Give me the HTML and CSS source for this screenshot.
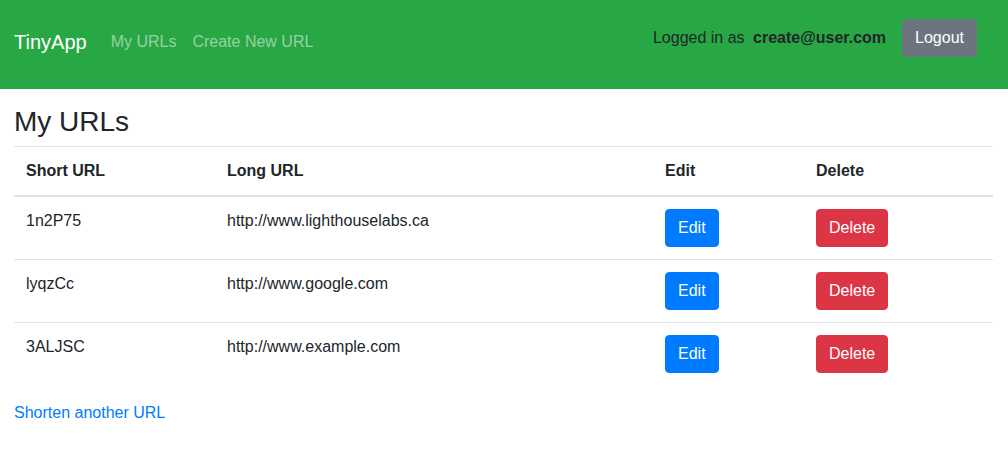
FILE: index.html
```html
<!DOCTYPE html>
<html lang="en">
<head>
<meta charset="utf-8">
<title>TinyApp</title>
<link rel="stylesheet" href="styles.css">
</head>
<body>
<nav class="navbar">
  <div class="nav-left">
    <a class="brand" href="#">TinyApp</a>
    <a class="nav-link" href="#">My URLs</a>
    <a class="nav-link" href="#">Create New URL</a>
  </div>
  <div class="nav-right">
    <span class="login-text">Logged in as <b class="email">create@user.com</b></span>
    <button class="btn btn-secondary" type="button">Logout</button>
  </div>
</nav>
<main class="main">
  <h3 class="title">My URLs</h3>
  <table class="table">
    <thead>
      <tr>
        <th class="col-short">Short URL</th>
        <th class="col-long">Long URL</th>
        <th class="col-edit">Edit</th>
        <th class="col-del">Delete</th>
      </tr>
    </thead>
    <tbody>
      <tr>
        <td>1n2P75</td>
        <td>http://www.lighthouselabs.ca</td>
        <td><button class="btn btn-primary" type="button">Edit</button></td>
        <td><button class="btn btn-danger" type="button">Delete</button></td>
      </tr>
      <tr>
        <td>lyqzCc</td>
        <td>http://www.google.com</td>
        <td><button class="btn btn-primary" type="button">Edit</button></td>
        <td><button class="btn btn-danger" type="button">Delete</button></td>
      </tr>
      <tr>
        <td>3ALJSC</td>
        <td>http://www.example.com</td>
        <td><button class="btn btn-primary" type="button">Edit</button></td>
        <td><button class="btn btn-danger" type="button">Delete</button></td>
      </tr>
    </tbody>
  </table>
  <a class="link" href="#">Shorten another URL</a>
</main>
</body>
</html>
```
FILE: styles.css
```css
* { box-sizing: border-box; }
html, body { margin: 0; }
body {
  font-family: "Liberation Sans", Arial, sans-serif;
  font-size: 16px;
  line-height: 24px;
  color: #212529;
  background: #fff;
}
.navbar {
  height: 89px;
  background: #28a745;
  display: flex;
  justify-content: space-between;
  align-items: flex-start;
  padding: 8px 16px 0 14px;
}
.nav-left {
  display: flex;
  align-items: center;
  margin-top: 14px;
}
.brand {
  font-size: 20px;
  line-height: 30px;
  padding: 5px 0;
  margin-right: 16px;
  color: #fff;
  text-decoration: none;
}
.nav-link {
  padding: 8px;
  color: rgba(255, 255, 255, 0.5);
  text-decoration: none;
}
.nav-right {
  display: flex;
  align-items: center;
  margin-top: 11px;
  margin-right: 15px;
}
.login-text { margin-right: 16px; }
.email { margin-left: 4px; font-weight: bold; }
.btn {
  font-family: inherit;
  font-size: 16px;
  line-height: 24px;
  padding: 6px 12px;
  border: 1px solid transparent;
  border-radius: 4px;
  color: #fff;
  cursor: pointer;
}
.btn-secondary { background: #6c757d; border-color: #6c757d; }
.btn-primary { background: #007bff; border-color: #007bff; }
.btn-danger { background: #dc3545; border-color: #dc3545; }
.main {
  padding: 16px 15px 0 14px;
}
.title {
  font-size: 28px;
  font-weight: 500;
  line-height: 1.2;
  margin: 0 0 7px;
}
.table {
  width: 100%;
  border-collapse: collapse;
  margin-bottom: 16px;
}
.table th, .table td {
  padding: 12px;
  text-align: left;
  vertical-align: top;
  border-top: 1px solid #dee2e6;
}
.table thead th {
  border-bottom: 2px solid #dee2e6;
  font-weight: bold;
}
.col-short { width: 201px; }
.col-long { width: 438px; }
.col-edit { width: 151px; }
.col-del { width: 189px; }
.link {
  color: #007bff;
  text-decoration: none;
}
```
